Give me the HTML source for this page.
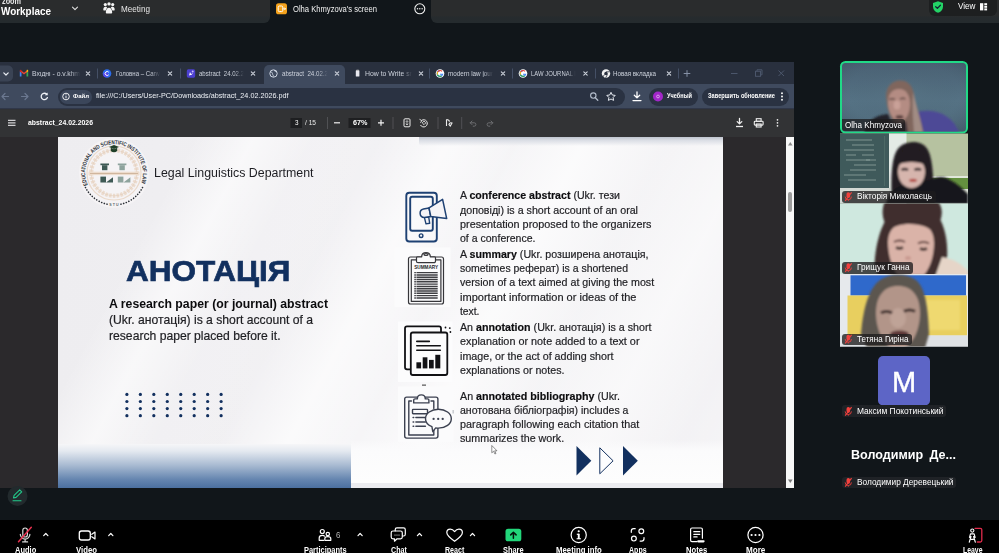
<!DOCTYPE html>
<html lang="en">
<head>
<meta charset="utf-8">
<title>Zoom Workplace - Meeting</title>
<style>
*{box-sizing:border-box;margin:0;padding:0}
html,body{width:999px;height:553px;overflow:hidden;background:#11161a;font-family:"Liberation Sans",sans-serif;}
#root{position:relative;width:999px;height:553px;overflow:hidden;background:#11161a;}
.a{position:absolute}
.t{position:absolute;white-space:nowrap;line-height:1;transform-origin:0 50%;font-family:"Liberation Sans",sans-serif;}
.t b{font-weight:700;color:#0b0b0d}
svg{position:absolute;overflow:visible}
/* top bar */
#tb-left{left:0;top:0;width:270px;height:22.5px;background:linear-gradient(180deg,#2a2c2d 0,#2a2c2d 15.5px,#262b2e 17px,#252b2e 22.5px);border-bottom-right-radius:6px}
#tb-right{left:431px;top:0;width:568px;height:22.5px;background:linear-gradient(180deg,#2a2c2d 0,#2a2c2d 15.5px,#262b2e 17px,#252b2e 22.5px);border-bottom-left-radius:6px}
#tb-pill{left:929px;top:-6px;width:68px;height:21.5px;background:#1d1f20;border-radius:6px}
/* chrome */
#chrome{left:0;top:62px;width:794px;height:426px;background:#2b292c;overflow:hidden}
#tabs{left:0;top:0;width:794px;height:22px;background:#29303e}
#tabact{left:264px;top:3px;width:81px;height:19px;background:#3f4a5e;border-radius:5px 5px 0 0}
#addr{left:0;top:22px;width:794px;height:25px;background:#3f4a5e}
#omni{left:58px;top:25.5px;width:567px;height:18px;background:#2a3242;border-radius:9px}
#filechip{left:60px;top:27.5px;width:32px;height:14px;background:#3b465a;border-radius:7px}
#prof{left:649px;top:25.5px;width:49px;height:18px;background:#2a3242;border-radius:9px}
#upd{left:702px;top:25.5px;width:87px;height:18px;background:#2a3242;border-radius:9px}
#ptb{left:0;top:47px;width:794px;height:28px;background:#323335}
#page{left:57.5px;top:75px;width:665.5px;height:351px;background:#f1eff2;overflow:hidden}
#sbar{left:785.5px;top:75px;width:8.5px;height:351px;background:#f7f7f7}
#sthumb{left:788px;top:192px;width:3.5px;height:20px;background:#9c9c9c;border-radius:2px}
.sep{position:absolute;width:1px;background:#55607a}
/* gallery */
.tile{position:absolute;left:840px;width:128px;overflow:hidden}
.lab{position:absolute;height:11.5px;background:rgba(30,28,30,.78);border-radius:3px}
/* bottom */
#bot{left:0;top:520px;width:999px;height:33px;background:#000}
</style>
</head>
<body>
<div id="root">

<!-- ===== zoom top bar ===== -->
<div id="tb-left" class="a"></div>
<div id="tb-right" class="a"></div>
<div id="tb-pill" class="a"></div>
<svg class="a" style="left:0;top:0" width="999" height="24" viewBox="0 0 999 24">
  <!-- chevron -->
  <path d="M72.5 7.2 L75 9.7 L77.5 7.2" fill="none" stroke="#e0e0e0" stroke-width="1.1" stroke-linecap="round" stroke-linejoin="round"/>
  <!-- meeting people icon -->
  <g fill="#f4f4f4">
    <circle cx="105.3" cy="4.6" r="1.6"/><circle cx="109" cy="3.9" r="1.7"/><circle cx="112.7" cy="4.6" r="1.6"/>
    <path d="M103.3 9.8c0-2.2 1-3 2.1-3s1.6.5 1.8 1.2c-.9.6-1.4 1.500-1.500 2.600h-1.900c-.3 0-.5-.3-.5-.8z"/>
    <path d="M114.700 9.800c0-2.200-1-3-2.100-3s-1.600.5-1.800 1.200c.9.600 1.400 1.500 1.500 2.600h1.900c.3 0 .5-.3.5-.8z"/>
    <path d="M105.800 12.600c0-3.200 1.500-4.800 3.200-4.800s3.200 1.600 3.200 4.800c0 .6-.4.900-.9.900h-4.600c-.5 0-.9-.3-.9-.9z"/>
  </g>
  <!-- orange share icon -->
  <rect x="276" y="3.300" width="11" height="11" rx="2.600" fill="#f4a21c"/>
  <rect x="278.200" y="6" width="4.600" height="5.600" rx="1.200" fill="none" stroke="#fff" stroke-width="1"/>
  <path d="M283.200 8.800h2.300M284.400 7.600l1.200 1.200-1.200 1.200" fill="none" stroke="#fff" stroke-width=".9"/>
  <!-- more circle -->
  <circle cx="419.800" cy="8.800" r="5" fill="none" stroke="#f0f0f0" stroke-width="1.100"/>
  <circle cx="417.500" cy="8.800" r=".75" fill="#f0f0f0"/><circle cx="419.800" cy="8.800" r=".75" fill="#f0f0f0"/><circle cx="422.100" cy="8.800" r=".75" fill="#f0f0f0"/>
  <!-- shield -->
  <path d="M938 1.200l5 1.800v3.700c0 3-2.100 5.100-5 6.100-2.900-1-5-3.100-5-6.100V3z" fill="#23d366"/>
  <path d="M935.700 6.700l1.700 1.700 3-3.200" fill="none" stroke="#123" stroke-width="1.300" stroke-linecap="round" stroke-linejoin="round"/>
  <!-- view grid icon -->
  <rect x="980" y="3.200" width="3.300" height="7.200" fill="#fff"/>
  <rect x="984.300" y="3.200" width="2.800" height="2" fill="#fff"/><rect x="984.300" y="5.800" width="2.800" height="2" fill="#fff"/><rect x="984.300" y="8.400" width="2.800" height="2" fill="#fff"/>
</svg>

<!-- ===== shared chrome window ===== -->
<div id="chrome" class="a">
  <div id="tabs" class="a"></div>
  <div id="tabact" class="a"></div>
  <div id="addr" class="a"></div>
  <div id="omni" class="a"></div>
  <div id="filechip" class="a"></div>
  <div id="prof" class="a"></div>
  <div id="upd" class="a"></div>
  <div id="ptb" class="a"></div>
    <svg class="a" style="left:0;top:0" width="794" height="76" viewBox="0 62 794 76">
    <!-- tab search button -->
    <rect x="-4" y="65.500" width="17" height="16" rx="5" fill="#3a4354"/>
    <path d="M3.800 72.800l2.200 2.200 2.200-2.200" fill="none" stroke="#e8ecf2" stroke-width="1.200" stroke-linecap="round" stroke-linejoin="round"/>
    <!-- gmail -->
    <g><path d="M19.800 71.200v5.200h1.700v-3.600z" fill="#4285f4"/><path d="M28.200 71.200v5.200h-1.700v-3.600z" fill="#34a853"/><path d="M19.800 71.200l4.200 3.200 4.200-3.200v-.5l-1-.4-3.200 2.400-3.200-2.400-1 .4z" fill="#ea4335"/><path d="M26.500 72.800l1.700-1.600v-.5c0-.8-.9-1.200-1.500-.7z" fill="#fbbc04"/><path d="M21.500 72.800l-1.700-1.600v-.5c0-.8.900-1.200 1.500-.7z" fill="#c5221f"/></g>
    <!-- canva -->
    <circle cx="107" cy="73.500" r="4.300" fill="#2a6df0"/><circle cx="105.800" cy="74.500" r="2.600" fill="#7d2ae8" opacity=".55"/>
    <path d="M108.700 72.200a2 2 0 1 0 0 2.600" fill="none" stroke="#fff" stroke-width="1"/>
    <!-- purple square -->
    <rect x="186.800" y="69.300" width="8.400" height="8.400" rx="1.600" fill="#4b3fd0"/><path d="M189 75.600l1-3.700 1.100 2 2-.8-1.400 1.600z" fill="#ffffff"/><circle cx="192.700" cy="71.500" r="1" fill="#c9b8ff"/>
    <!-- globe (active) -->
    <circle cx="273.500" cy="73.500" r="3.700" fill="none" stroke="#cfd6e2" stroke-width="1"/><path d="M270.500 72c1.500 0 2 .8 2 1.800s1 1.200 1 2.700M274.300 70c0 1.400 1.200 1.400 2.700 1.700" fill="none" stroke="#cfd6e2" stroke-width=".9"/>
    <!-- doc icon -->
    <rect x="355.800" y="70.300" width="3.600" height="6.200" rx=".6" fill="#e8e8ee"/><rect x="356.500" y="69.700" width="2.200" height="1.200" fill="#bbb"/>
    <!-- google icons -->
    <g id="gico"><circle cx="440" cy="73.500" r="4.300" fill="#fff"/><path d="M440 70.700a2.800 2.800 0 1 0 2.700 3.500h-2.700" fill="none" stroke="#4285f4" stroke-width="1.150"/><path d="M437.700 71.900a2.800 2.800 0 0 1 4.300-.6" fill="none" stroke="#ea4335" stroke-width="1.150"/><path d="M437.500 74.700a2.800 2.800 0 0 1 .2-2.800" fill="none" stroke="#fbbc05" stroke-width="1.150"/><path d="M441.500 75.900a2.800 2.800 0 0 1-4-1.200" fill="none" stroke="#34a853" stroke-width="1.150"/></g>
    <use href="#gico" x="83"/>
    <!-- chrome icon -->
    <circle cx="606" cy="73.500" r="4.200" fill="#f2f2f2"/><circle cx="606" cy="73.500" r="1.700" fill="#29303e"/><path d="M606 71.800h3.800M604.500 74.400l-1.900 3.200M607.500 74.400l-1.800 3.300" stroke="#29303e" stroke-width=".8"/>
    <!-- close x -->
    <g stroke="#cfd4dd" stroke-width="1.100" stroke-linecap="round">
      <g id="cx"><path d="M86.300 71.800l3.400 3.400M89.700 71.800l-3.400 3.400"/></g>
      <use href="#cx" x="82"/><use href="#cx" x="165"/><use href="#cx" x="249"/><use href="#cx" x="333"/><use href="#cx" x="415"/><use href="#cx" x="497.500"/><use href="#cx" x="581"/>
    </g>
    <!-- separators -->
    <g stroke="#455066" stroke-width="1"><path d="M97.500 68.500v10M180.500 68.500v10M429.500 68.500v10M512.500 68.500v10M595.500 68.500v10M678.500 68.500v10"/></g>
    <!-- plus -->
    <path d="M683.700 73.500h6.600M687 70.200v6.600" stroke="#8590a5" stroke-width="1"/>
    <!-- window controls (dim) -->
    <g stroke="#4b566b" stroke-width="1" fill="none"><path d="M731 73.500h6.500"/><rect x="755.500" y="71.300" width="5" height="5"/><path d="M757 71.300v-1.500h5v5h-1.500"/><path d="M778.500 70.500l5.500 5.500M784 70.500l-5.500 5.500"/></g>

    <!-- nav arrows -->
    <g fill="none" stroke="#6b7890" stroke-width="1.200" stroke-linecap="round" stroke-linejoin="round">
      <path d="M8.500 96.500h-6M5 93.500l-3 3 3 3"/><path d="M21.500 96.500h6M25 93.500l3 3-3 3"/>
    </g>
    <path d="M46.800 94.300a3.200 3.200 0 1 0 .6 3.300" fill="none" stroke="#eef1f6" stroke-width="1.300" stroke-linecap="round"/><path d="M47.600 92.400v2.800h-2.800z" fill="#eef1f6"/>
    <!-- info i -->
    <circle cx="66" cy="96.500" r="3.300" fill="none" stroke="#fff" stroke-width=".9"/><path d="M66 95.900v2.400" stroke="#fff" stroke-width=".9"/><circle cx="66" cy="94.700" r=".5" fill="#fff"/>
    <!-- zoom glass -->
    <circle cx="593.300" cy="95.600" r="2.700" fill="none" stroke="#b3bccb" stroke-width="1.100"/><path d="M595.300 97.700l2.500 2.500" stroke="#b3bccb" stroke-width="1.300" stroke-linecap="round"/>
    <!-- star -->
    <path d="M611 92.300l1.300 2.700 2.900.4-2.100 2.100.5 2.900-2.600-1.400-2.600 1.400.5-2.900-2.100-2.100 2.900-.4z" fill="none" stroke="#e4e8ef" stroke-width="1" stroke-linejoin="round"/>
    <!-- download -->
    <path d="M637 92v5.600M634.300 95.200l2.700 2.700 2.700-2.700M633 100.600h8" fill="none" stroke="#fff" stroke-width="1.300" stroke-linecap="round" stroke-linejoin="round"/>
    <!-- profile circle -->
    <circle cx="658" cy="96.500" r="5" fill="#a227c9"/><circle cx="658" cy="96.500" r="1.400" fill="none" stroke="#e9c8f5" stroke-width=".7"/>
    <!-- kebab -->
    <circle cx="782" cy="93.200" r=".95" fill="#fff"/><circle cx="782" cy="96.500" r=".95" fill="#fff"/><circle cx="782" cy="99.800" r=".95" fill="#fff"/>
    <!-- bottom line of addr bar -->
    <rect x="0" y="108.200" width="794" height=".9" fill="#2d3445"/>

    <!-- pdf toolbar -->
    <path d="M8 120.300h7.500M8 122.800h7.500M8 125.300h7.500" stroke="#cfcfd2" stroke-width="1.300"/>
    <rect x="290.500" y="118" width="11.500" height="10" fill="#1e1f21"/>
    <rect x="348.500" y="118" width="22" height="10" fill="#1e1f21"/>
    <g stroke="#505154" stroke-width="1"><path d="M327.500 117v12M393 117v12M438 117v12M461.700 117v12"/></g>
    <path d="M334 122.800h6" stroke="#f2f2f2" stroke-width="1.200"/><path d="M378 122.800h6M381 119.800v6" stroke="#f2f2f2" stroke-width="1.200"/>
    <rect x="404" y="118.800" width="6" height="8" rx="1" fill="none" stroke="#ececec" stroke-width="1"/><path d="M407 120.800v4M405.800 121.800l1.200-1.200 1.200 1.200M405.800 123.800l1.200 1.200 1.200-1.200" fill="none" stroke="#ececec" stroke-width=".7"/>
    <path d="M421.500 120.500a3.600 3.600 0 1 1-1 4.500" fill="none" stroke="#ececec" stroke-width="1"/><path d="M419.500 119.300l2.300 1.300-1.300 2.200" fill="none" stroke="#ececec" stroke-width=".9"/><rect x="422.800" y="121.600" width="2.500" height="2.500" transform="rotate(45 424 122.800)" fill="none" stroke="#ececec" stroke-width=".8"/>
    <path d="M446.500 119.500v6.500M446.500 119.500c1.800 0 2.800.8 3 2.200M449 124.500c.4-1.600 1.500-2.200 3-1.500l-1.700 3z" fill="none" stroke="#ececec" stroke-width="1.100"/>
    <g fill="none" stroke="#6c6d70" stroke-width="1" stroke-linecap="round" stroke-linejoin="round"><path d="M472 121l-1.800 1.800 1.800 1.800M470.200 122.800h4a1.700 1.700 0 0 1 0 3.400h-1"/><path d="M491 121l1.800 1.800-1.800 1.800M492.800 122.800h-4a1.700 1.700 0 0 0 0 3.400h1"/></g>
    <path d="M739.500 118.500v5M737.200 121.600l2.300 2.300 2.300-2.300" fill="none" stroke="#f0f0f0" stroke-width="1.300" stroke-linecap="round" stroke-linejoin="round"/><path d="M736 126.500h7" stroke="#f0f0f0" stroke-width="1.300"/>
    <g fill="none" stroke="#f0f0f0" stroke-width="1.100"><rect x="756.300" y="118.700" width="4.800" height="2.600"/><rect x="754.300" y="121.300" width="8.800" height="3.800" rx=".8"/><rect x="756.300" y="124" width="4.800" height="3"/></g>
    <circle cx="777.500" cy="119.800" r=".85" fill="#f0f0f0"/><circle cx="777.500" cy="122.800" r=".85" fill="#f0f0f0"/><circle cx="777.500" cy="125.800" r=".85" fill="#f0f0f0"/>
  </svg>

  <div id="page" class="a">
        <!-- slide background (coords relative to page: subtract 57.5, 137) -->
    <div class="a" style="left:0;top:0;width:666px;height:351px;background:
      linear-gradient(118deg,rgba(255,255,255,0) 0%,rgba(255,255,255,0) 16%,rgba(255,255,255,.6) 23%,rgba(255,255,255,.15) 30%,rgba(255,255,255,.1) 38%,rgba(255,255,255,.7) 46%,rgba(255,255,255,.35) 54%,rgba(255,255,255,.75) 62%,rgba(255,255,255,.3) 72%,rgba(255,255,255,.6) 82%,rgba(255,255,255,.2) 92%,rgba(255,255,255,.4) 100%),
      linear-gradient(90deg,#eeedf0 0%,#f1f0f3 45%,#f0eff2 100%)"></div>
    <!-- top right shadow band -->
    <div class="a" style="left:361px;top:0;width:305px;height:9px;background:linear-gradient(180deg,#bfc4cf 0%,#dcdfe6 40%,rgba(240,240,244,0) 100%);border-bottom-left-radius:3px"></div>
    <!-- bottom right light band -->
    <div class="a" style="left:293px;top:303px;width:373px;height:43px;background:linear-gradient(180deg,rgba(255,255,255,0) 0%,#fbfbfc 25%,#fdfdfd 100%)"></div>
    <div class="a" style="left:293px;top:346px;width:373px;height:5px;background:#ebebef"></div>
    <!-- bottom left blue gradient -->
    <div class="a" style="left:0;top:307px;width:293px;height:44px;background:linear-gradient(180deg,#f6f6f8 0%,#e4e9f0 16%,#a9bbd2 48%,#6686b0 80%,#4c70a0 100%)"></div>

    <!-- logo -->
    <svg class="a" style="left:19.900px;top:-.800px" width="74" height="74" viewBox="-37 -37 74 74">
      <defs>
        <path id="ringTop" d="M-26.300 12 A28.900 28.900 0 1 1 26.600 11.400"/>
      </defs>
      <circle r="35" fill="#f5f3f5"/>
      <circle r="27" fill="none" stroke="#ead9ca" stroke-width="1.200"/>
      <circle r="22.800" fill="none" stroke="#ecdccf" stroke-width="4.200" stroke-dasharray="2.600 1.200"/>
      <circle r="22.800" fill="none" stroke="#e3cdb9" stroke-width=".6"/>
      <text font-family="Liberation Sans, sans-serif" font-size="5.700" font-weight="700" fill="#2b3036" textLength="113" lengthAdjust="spacingAndGlyphs"><textPath href="#ringTop" startOffset="0" textLength="113" lengthAdjust="spacingAndGlyphs">EDUCATIONAL AND SCIENTIFIC INSTITUTE OF LAW</textPath></text>
      <path d="M-28.500 14.500 A32 32 0 0 0 28.500 14.500" fill="none" stroke="#2b3036" stroke-width="1.600" stroke-dasharray=".1 2.700" stroke-linecap="round"/>
      <rect x="-6" y="28.200" width="12" height="5" fill="#f5f3f5"/>
      <text font-family="Liberation Sans, sans-serif" font-size="3.600" font-weight="700" fill="#5f6b6b" text-anchor="middle" x=".4" y="32.800" letter-spacing="1.100">STU</text>
      <!-- cap -->
      <path d="M-5 -26 L0 -28 L5 -26 L0 -24 z" fill="#1f3f28"/>
      <path d="M-3.200 -25.200 v3.100 c1.900 1.800 4.500 1.800 6.400 0 v-3.100 L0 -23.700z" fill="#1f3f28"/>
      <!-- LL emblem -->
      <g fill="#3f5a55">
        <rect x="-13.600" y="-9.500" width="8.600" height="1.700"/><rect x="-12" y="-7.800" width="5.400" height="5"/>
        <rect x="-13.600" y="3.600" width="5.600" height="5.900"/><path d="M-8 9.500h7v-5.200z"/>
      </g>
      <g fill="#8ea39d">
        <rect x="3.800" y="-9.500" width="8.600" height="1.700"/><rect x="5.400" y="-7.800" width="5.400" height="5"/>
        <rect x="3.800" y="3.600" width="5.600" height="5.900"/><path d="M9.400 9.500h7v-5.200z"/>
      </g>
      <rect x="-25.500" y="-1.300" width="51" height="3.400" fill="#eddccd"/>
      <rect x="-24" y="0" width="48" height=".8" fill="#c9ad93"/>
    </svg>

    <!-- dots -->
    <svg class="a" style="left:0;top:0" width="666" height="351" viewBox="57.500 137 666 351">
      <g fill="#12305f">
        <g id="dcol"><circle cx="126.400" cy="394.400" r="1.600"/><circle cx="126.400" cy="401.500" r="1.600"/><circle cx="126.400" cy="408.600" r="1.600"/><circle cx="126.400" cy="415.700" r="1.600"/></g>
        <use href="#dcol" x="13.460"/><use href="#dcol" x="26.920"/><use href="#dcol" x="40.380"/><use href="#dcol" x="53.840"/><use href="#dcol" x="67.300"/><use href="#dcol" x="80.760"/><use href="#dcol" x="94.220"/>
      </g>

      <!-- arrows -->
      <path d="M576 446 L590.800 460.800 L576 475.500z" fill="#12305f"/>
      <path d="M599.300 447.800 L612.600 460.800 L599.300 473.800z" fill="#fdfdfe" stroke="#12305f" stroke-width="1" stroke-linejoin="miter"/>
      <path d="M622.500 446 L637.300 460.800 L622.500 475.500z" fill="#12305f"/>

      <!-- icon 1: phone + megaphone -->
      <g fill="none" stroke="#1e4173" stroke-width="1.900" stroke-linejoin="round" stroke-linecap="round">
        <rect x="405.800" y="192.700" width="30.500" height="48.800" rx="3"/>
        <rect x="409.700" y="196.800" width="22.600" height="34" rx="2"/>
        <circle cx="420.600" cy="235.700" r="1.800" stroke-width="1.400"/>
        <path d="M423.800 217.200 L425.500 223.900 L429.200 223.300 L428.200 217z" fill="#f5f4f7" stroke-width="1.400"/>
        <path d="M428.500 207.900 L423 209 a4.300 4.300 0 0 0 .8 8.500 L430.300 216.600z" fill="#f5f4f7" stroke-width="1.500"/>
        <path d="M428.500 207.900 L442.100 199.300 L446.200 218.600 L430.300 216.600z" fill="#f5f4f7" stroke-width="1.500"/>
      </g>

      <!-- icon 2: SUMMARY clipboard -->
      <rect x="394" y="247.500" width="56" height="59.500" fill="#fbfbfc"/>
      <g fill="none" stroke="#36363a" stroke-width="1.200" stroke-linejoin="round">
        <rect x="408" y="257" width="35" height="47" rx="2"/>
        <rect x="410.800" y="259.800" width="29.600" height="41.600"/>
        <path d="M416 261.200 v-3.400 a1 1 0 0 1 1 -1 h4.200 c0 -5.600 8.600 -5.600 8.600 0 h4.200 a1 1 0 0 1 1 1 v3.400 a1.500 1.500 0 0 1 -1.500 1.500 h-16 a1.500 1.500 0 0 1 -1.500 -1.500z" fill="#fbfbfc"/>
        <ellipse cx="425.500" cy="254.600" rx="2.100" ry=".9"/>
      </g>
      <text x="425.700" y="269.300" text-anchor="middle" font-family="Liberation Sans, sans-serif" font-weight="700" font-size="4.900" fill="#26262a" textLength="24" lengthAdjust="spacingAndGlyphs">SUMMARY</text>
      <path d="M413.800 272.600h23.400M413.800 274.900h23.400M413.800 277.200h23.400M413.800 279.500h23.400M413.800 281.800h23.400M413.800 284.100h23.400M413.800 286.400h23.400M413.800 288.700h23.400M413.800 291h23.400M413.800 293.300h23.400M413.800 295.600h23.400M413.800 297.900h23.400" stroke="#3e3e42" stroke-width="1.450" fill="none"/>
      <path d="M415.800 271.500v27.500" stroke="#fbfbfc" stroke-width=".6" fill="none"/>

      <!-- icon 3: documents chart -->
      <rect x="397.500" y="321.500" width="54.500" height="60.500" fill="#fcfcfd"/>
      <g fill="none" stroke="#111114" stroke-width="1.800" stroke-linejoin="round" stroke-linecap="round">
        <path d="M410.300 369.300 H406.500 a2 2 0 0 1 -2 -2 V328.300 a2 2 0 0 1 2 -2 H438.500 a2 2 0 0 1 2 2 V332"/>
        <rect x="410.300" y="332.500" width="36.500" height="42.500" rx="2" fill="#fcfcfd"/>
        <path d="M416.300 341.400h12.500M416.300 345.800h23.500M416.300 350.300h23.500" stroke-width="1.600"/>
      </g>
      <g fill="#111114">
        <rect x="415.900" y="362.300" width="4.700" height="6.100"/><rect x="422.200" y="357.300" width="4.700" height="11.100"/><rect x="428.500" y="359.900" width="4.700" height="8.500"/><rect x="434.800" y="354.800" width="5" height="13.600"/>
        <circle cx="445" cy="327.500" r=".9"/><circle cx="449.300" cy="328.100" r=".9"/><circle cx="449.900" cy="332" r=".9"/>
        <rect x="421.500" y="384.600" width="4" height="1" fill="#333"/>
      </g>

      <!-- icon 4: clipboard + chat -->
      <rect x="397.500" y="386.500" width="55.500" height="55.500" fill="#fbfbfc"/>
      <g fill="none" stroke="#3c4150" stroke-width="1.400" stroke-linejoin="round" stroke-linecap="round">
        <rect x="404.200" y="397.100" width="33.200" height="41" rx="2"/>
        <path d="M430.500 401 H433.300 V408.500 M433.300 429 V435 H408.300 V401 H411"/>
        <path d="M413.200 402.900 v-2.700 a1.300 1.300 0 0 1 1.300 -1.300 h2.300 c0 -5.400 8 -5.400 8 0 h2.300 a1.300 1.300 0 0 1 1.300 1.300 v2.700z" fill="#fbfbfc"/>
        <rect x="412" y="409.400" width="15" height="4.300" rx=".6"/>
        <path d="M412.600 417.600h.6M415.400 417.600h9.500M412.600 421.900h.6M415.400 421.900h9.500M412.600 426.300h.6M415.400 426.300h9.500" stroke-width="1.500"/>
        <path d="M437.900 409.300 c7.200 0 12.900 4.200 12.900 9.400 s-5.700 9.400 -12.900 9.400 c-.9 0 -1.800 -.1 -2.700 -.2 l-2.900 3.800 l-.9 -5 c-3.900 -1.600 -6.400 -4.600 -6.400 -8 c0 -5.200 5.700 -9.400 12.900 -9.400z" fill="#fbfbfc"/>
      </g>
      <g fill="#3c4150"><circle cx="433.100" cy="418.900" r="1.150"/><circle cx="437.700" cy="418.900" r="1.150"/><circle cx="442.200" cy="418.900" r="1.150"/></g>
      <rect x="452.200" y="410" width=".8" height="3.500" fill="#9a9fa8"/>

      <!-- mouse cursor -->
      <path d="M491.300 445.500 v7.300 l1.800 -1.600 l1.300 2.800 l1.100 -.5 l-1.300 -2.700 h2.300z" fill="#fff" stroke="#444" stroke-width=".6"/>
    </svg>

  </div>
  <div id="sbar" class="a"></div>
  <div id="sthumb" class="a" style="top:130px"></div>
  <svg class="a" style="left:785.5px;top:75px" width="9" height="351" viewBox="0 0 9 351">
    <path d="M2 8.500l2.300-3.500 2.300 3.500z" fill="#8a8a8a"/>
    <path d="M2 342.500l2.300 3.500 2.300-3.500z" fill="#7a7a7a"/>
  </svg>
</div>

<!-- ===== gallery ===== -->
<svg class="a" style="left:0;top:0" width="999" height="553" viewBox="0 0 999 553">
  <defs>
    <filter id="bl1" x="-10%" y="-10%" width="120%" height="120%"><feGaussianBlur stdDeviation="1.300"/></filter>
    <filter id="bl2" x="-10%" y="-10%" width="120%" height="120%"><feGaussianBlur stdDeviation="0.700"/></filter>
    <clipPath id="c1"><rect x="842" y="63" width="124" height="68.500" rx="3.500"/></clipPath>
    <clipPath id="c2"><rect x="840" y="133.500" width="128" height="70"/></clipPath>
    <clipPath id="c3"><rect x="840" y="203.500" width="128" height="70.500"/></clipPath>
    <clipPath id="c4"><rect x="840" y="274" width="128" height="72.500"/></clipPath>
    <linearGradient id="g1" x1="0" y1="0" x2="0" y2="1"><stop offset="0" stop-color="#4a6174"/><stop offset=".55" stop-color="#557284"/><stop offset="1" stop-color="#506b7c"/></linearGradient>
  <radialGradient id="v1" cx=".5" cy=".45" r=".75"><stop offset="0" stop-color="#5d7a8a" stop-opacity=".35"/><stop offset=".6" stop-color="#4a6070" stop-opacity="0"/><stop offset="1" stop-color="#2f4150" stop-opacity=".45"/></radialGradient>
  </defs>

  <!-- tile 1: Olha (active speaker) -->
  <rect x="840" y="61" width="128" height="72.500" rx="5.500" fill="#21d987"/>
  <g clip-path="url(#c1)">
    <rect x="842" y="63" width="124" height="69" fill="url(#g1)"/>
    <rect x="842" y="63" width="124" height="69" fill="url(#v1)"/>
    <g filter="url(#bl1)">
      <path d="M864 133c2-10 10-18 24-19l8 19z" fill="#222229"/>
      <path d="M914 113c14-5 30-2 40 10l6 10h-46z" fill="#4e4a96"/>
      <path d="M886.500 100c-2-12 5-19.500 14-19.500 8 0 12.500 6 14 16 1.500 10 6 20 9 36.500h-18c-9-4-18-17-19-33z" fill="#80665d"/>
      <path d="M913 92c3 12 7 26 10 41h-9c-1-14-2-28-1-41z" fill="#a18c84"/>
      <path d="M888 103c0-9 4-14 11-14s11 6 11 15-4 17-10 17c-7 0-12-9-12-18z" fill="#b48c83"/>
      <ellipse cx="897" cy="105" rx="3.500" ry="4.500" fill="#c9a198"/>
      <path d="M889.500 99.500c2-1 4-1 5.500 0M900 99c2-1 4-1 5.500 0" stroke="#5b4440" stroke-width="1.500" fill="none"/>
      <ellipse cx="899.500" cy="117" rx="4" ry="2" fill="#5f4442"/>
      <path d="M889 118c4 6 12 7 17 3l2 12h-18z" fill="#3a3038"/>
    </g>
  </g>

  <!-- tile 2: Вікторія -->
  <g clip-path="url(#c2)">
    <rect x="840" y="133" width="128" height="71" fill="#b6c2a0"/>
    <rect x="840" y="133" width="49" height="55" fill="#3f5a5b"/>
    <rect x="889" y="133" width="17.500" height="71" fill="#e4ebe6"/>
    <rect x="906.500" y="176" width="62" height="2" fill="#e0e7da"/>
    <rect x="906.500" y="178" width="62" height="11" fill="#64903f"/>
    <rect x="840" y="188" width="50" height="16" fill="#d3d9d4"/>
    <rect x="940" y="189" width="28" height="15" fill="#dfe5dc"/>
    <g stroke="#a9bcb8" stroke-width=".8" fill="none" opacity=".75" filter="url(#bl2)">
      <path d="M846 140h26M852 145h22M844 150h30M862 155h12M846 160h24M854 165h22M850 170h26M844 175h22M848 180h28M846 155h10M866 160h10"/>
      <path d="M884.500 136v50" stroke="#58746f"/>
    </g>
    <g filter="url(#bl1)">
      <path d="M892 204c-1-20-1-42 4-52 5-12 26-14 32-2 6 12 4 30 8 54z" fill="#211c20"/>
      <path d="M886 204c2-12 10-18 22-20l22-4c8-4 14-4 20 0 8 4 14 10 18 14v10z" fill="#17161a"/>
      <path d="M898 172c0-9 5-13 13.500-13s13.500 4 13.500 13-6 16-13.500 16-13.500-7-13.500-16z" fill="#d6b5ad"/>
      <path d="M896.500 165c1-12 8-18 15-18s14 6 15 18c-9-4-21-4-30 0z" fill="#211c20"/>
      <path d="M901.500 170c2-1.200 4.500-1.200 6.500 0M914.500 170c2-1.200 4.500-1.200 6.500 0" stroke="#2a1f22" stroke-width="2.600" fill="none"/>
      <ellipse cx="913" cy="180.300" rx="4" ry="1.600" fill="#b2453f"/>
    </g>
  </g>

  <!-- tile 3: Грищук -->
  <g clip-path="url(#c3)">
    <rect x="840" y="203" width="128" height="71" fill="#cfe8df"/>
    <g filter="url(#bl1)">
      <path d="M874.500 264c1-18 5-32 10-42-3-8-2-14 0-20h54c4 6 4 12 2 18 6 12 8 28 6 44l-10 12h-58z" fill="#3f2f2e"/>
      <path d="M942 257c12 2 22 8 27 16v4h-34z" fill="#e6d5c8"/>
      <path d="M888 242c0-13 8-20 23-20s23 7 23 21c0 13-4 25-10 32h-26c-6-7-10-20-10-33z" fill="#dab3a8"/>
      <path d="M886 232c2-8 8-14 14-15l28 1c6 6 7 10 7 16-8-12-36-14-49-2z" fill="#3f2f2e"/>
      <path d="M894 242c3-2 8-2 11 0M918 243.500c3-2 8-2 11 0" stroke="#5a3b38" stroke-width="1.800" fill="none"/>
      <path d="M896 247.500c2 1 5 1 7 0M920 248.500c2 1 5 1 7 0" stroke="#3a2928" stroke-width="2.600" fill="none"/>
      <ellipse cx="908" cy="258" rx="3" ry="2" fill="#c99a90"/>
    </g>
  </g>

  <!-- tile 4: Тетяна -->
  <g clip-path="url(#c4)">
    <rect x="840" y="274" width="128" height="73" fill="#e6e9ec"/>
    <rect x="850.500" y="275.300" width="115.500" height="20.200" fill="#2f69cb"/>
    <rect x="847.500" y="295.500" width="119.500" height="40" fill="#e8cf5f"/>
    <rect x="900" y="300" width="60" height="30" fill="#efd96f" filter="url(#bl1)"/>
    <rect x="840" y="335.500" width="128" height="11.500" fill="#dfe2e5"/>
    <g filter="url(#bl1)">
      <path d="M861 334c2-26 8-46 19-54 10-7 26-7 36 0 10 8 12 30 13 54l-4 14h-58z" fill="#5c5650"/>
      <path d="M876 313c0-17 8-27 22-27s22 10 22 27-8 36-22 36-22-19-22-36z" fill="#b29589"/>
      <ellipse cx="898" cy="318" rx="8" ry="10" fill="#bfa397"/>
      <path d="M881 313c3-2 8-2 11 0M904 311.500c3-2 8-2 11 0" stroke="#3f302e" stroke-width="3.200" fill="none"/>
      <ellipse cx="899.500" cy="334" rx="9.500" ry="3.500" fill="#5e3937"/>
    </g>
  </g>

  <!-- M avatar -->
  <rect x="878" y="356" width="52" height="49.500" rx="5" fill="#5d65c6"/>
</svg>

<!-- name labels -->
<div class="lab" style="left:842px;top:118.800px;width:63px;height:12.200px;border-radius:0 3px 0 3px;background:rgba(28,26,28,.72)"></div>
<div class="lab" style="left:841.500px;top:191px;width:94px"></div>
<div class="lab" style="left:841.500px;top:262px;width:71px"></div>
<div class="lab" style="left:841.500px;top:333.500px;width:70px"></div>
<div class="lab" style="left:841.500px;top:404.600px;width:104.500px;height:12.400px;background:#1f2226"></div>
<div class="lab" style="left:841.500px;top:476.800px;width:114.500px;background:#1f2226"></div>
<svg class="a" style="left:0;top:0" width="999" height="553" viewBox="0 0 999 553">
  <g id="mic">
    <rect x="846.500" y="192.300" width="3.600" height="5.800" rx="1.800" fill="#f2403d"/>
    <path d="M845.200 196.600a3.100 3.100 0 0 0 6.200 0M848.300 199.700v1.200" fill="none" stroke="#f2403d" stroke-width=".9"/>
    <path d="M851.600 192.300l-6.400 8.600" stroke="#f2403d" stroke-width="1.100"/>
  </g>
  <use href="#mic" y="71"/><use href="#mic" y="142.500"/><use href="#mic" y="214.800"/><use href="#mic" y="285.800"/>
</svg>


<!-- ===== bottom toolbar ===== -->
<div id="bot" class="a"></div>
<svg class="a" style="left:0;top:0" width="999" height="553" viewBox="0 0 999 553">
  <!-- pencil annotate button -->
  <circle cx="17.500" cy="496" r="10" fill="#222a2d"/>
  <g fill="none" stroke="#22c98a" stroke-width="1.100" stroke-linejoin="round" stroke-linecap="round">
    <path d="M13.500 498l.6-2.600 5.600-5.600 2 2-5.600 5.600z"/><path d="M13 500.800h8"/>
  </g>
  <g fill="none" stroke="#fff" stroke-width="1.200" stroke-linecap="round" stroke-linejoin="round">
    <!-- chevrons -->
    <g id="chev"><path d="M43.700 535.600l2.100-2.100 2.100 2.100"/></g>
    <use href="#chev" x="65"/><use href="#chev" x="314.300"/><use href="#chev" x="373.700"/><use href="#chev" x="426.700"/>
    <!-- audio mic -->
    <rect x="22.800" y="528" width="4.600" height="9" rx="2.300" stroke="#d9d9d9"/>
    <path d="M20.300 534.300a4.800 4.800 0 0 0 9.600 0M25.100 539.200v2.600M22.600 541.900h5" stroke="#d9d9d9"/>
    <path d="M31.300 527.300l-12.800 14.400" stroke="#e8304f" stroke-width="1.500"/>
    <!-- video -->
    <rect x="79.300" y="531" width="11" height="9" rx="2.200" stroke-width="1.300"/>
    <path d="M91.800 534.300l3.200-2.200v6.800l-3.200-2.200" stroke-width="1.200"/>
    <!-- participants -->
    <circle cx="322.300" cy="531.500" r="2"/><path d="M319.200 540.300v-2.300c0-1.700 1.300-2.700 3.100-2.700 1 0 1.800.3 2.300.8M319.200 540.300h4.500"/>
    <circle cx="327.800" cy="534" r="1.700"/><path d="M324.800 540.300v-1.600c0-1.300 1.200-2 3-2s3 .7 3 2v1.600z"/>
    <!-- chat -->
    <path d="M395.200 530.800v-1.100c0-1 .8-1.800 1.800-1.800h6.500c1 0 1.800.8 1.800 1.800v4.500c0 1-.8 1.800-1.800 1.800h-.5"/>
    <path d="M393 531h7.500c1 0 1.800.8 1.800 1.800v4.200c0 1-.8 1.800-1.800 1.800h-3.400l-2.600 2.400v-2.400h-1.500c-1 0-1.800-.8-1.800-1.800v-4.200c0-1 .8-1.800 1.800-1.800z"/>
    <!-- react heart -->
    <path d="M454.600 541.300c-4.400-3-7.800-5.600-7.800-8.700 0-2 1.500-3.500 3.500-3.500 1.700 0 3.100.9 4.300 2.500 1.200-1.600 2.600-2.500 4.300-2.500 2 0 3.500 1.500 3.500 3.500 0 3.100-3.400 5.700-7.800 8.700z"/>
    <!-- meeting info -->
    <circle cx="578.700" cy="535" r="7.600"/>
    <!-- apps -->
    <path d="M631.300 532.300v-1.300c0-1.300 1-2.300 2.300-2.300h1.600M644 537.500v1.300c0 1.300-1 2.300-2.300 2.300h-1.600"/>
    <circle cx="641.300" cy="531.300" r="2.400"/><circle cx="633.900" cy="538.600" r="2.400"/>
    <!-- notes -->
    <path d="M692 528h9c.8 0 1.400.6 1.400 1.400v8.800M697 541.700h-5c-.8 0-1.400-.6-1.400-1.400v-10.900c0-.8.600-1.400 1.400-1.400"/>
    <path d="M693.800 531.700h6M693.800 534.300h6M693.800 536.900h3.300"/>
    <path d="M698.300 541.300h5.200" stroke-width="2.300"/>
    <!-- more -->
    <circle cx="755.500" cy="535" r="7.600"/>
  </g>
  <g fill="#fff">
    <circle cx="578.700" cy="531.300" r="1.050"/><rect x="577.800" y="533.700" width="1.900" height="5.300" rx=".4"/><rect x="576.800" y="533.700" width="2.400" height="1.200"/><rect x="576.600" y="538.200" width="4.300" height="1.100"/>
    <circle cx="751.600" cy="535" r="1.100"/><circle cx="755.500" cy="535" r="1.100"/><circle cx="759.400" cy="535" r="1.100"/>
    <circle cx="395" cy="535" r=".6"/><circle cx="397" cy="535" r=".6"/><circle cx="399" cy="535" r=".6"/>
  </g>
  <!-- share -->
  <rect x="505.500" y="528.800" width="15.800" height="12.500" rx="2.600" fill="#22d67a"/>
  <path d="M513.400 538.300v-5.600M510.700 534.900l2.700-2.700 2.700 2.700" fill="none" stroke="#04130b" stroke-width="1.500" stroke-linecap="round" stroke-linejoin="round"/>
  <!-- leave -->
  <g fill="none" stroke-linecap="round" stroke-linejoin="round">
    <path d="M975 528.300h5.300c.9 0 1.500.6 1.500 1.500v10.700c0 .9-.6 1.500-1.500 1.500h-3" stroke="#e02b4b" stroke-width="1.300"/>
    <circle cx="972.300" cy="530.600" r="1.600" stroke="#fff" stroke-width="1.100"/>
    <path d="M969.500 537.300l1-3.400h3.600l1 3.400M971 536.500l-1.700 5.700M973.600 536.500l1.700 5.700M971.200 539.300h2.300" stroke="#fff" stroke-width="1.200"/>
  </g>
</svg>


<div id="t0" class="t" style="left:154.00px;top:166.59px;font-size:12.30px;font-weight:400;color:#1d1d22;transform:scaleX(1.0057);">Legal Linguistics Department</div>
<div id="t1" class="t" style="left:126.00px;top:255.77px;font-size:29.80px;font-weight:700;color:#12305f;transform:scaleX(1.0577);-webkit-text-stroke:.7px #12305f;">АНОТАЦІЯ</div>
<div id="t2" class="t" style="left:109.00px;top:297.50px;font-size:12.40px;font-weight:400;color:#111;transform:scaleX(0.9898);"><b>A research paper (or journal) abstract</b></div>
<div id="t3" class="t" style="left:109.00px;top:314.00px;font-size:12.40px;font-weight:400;color:#1e1e22;transform:scaleX(0.9820);-webkit-text-stroke:.2px #1e1e22;">(Ukr. анотація) is a short account of a</div>
<div id="t4" class="t" style="left:109.00px;top:330.10px;font-size:12.40px;font-weight:400;color:#1e1e22;transform:scaleX(0.9803);-webkit-text-stroke:.2px #1e1e22;">research paper placed before it.</div>
<div id="t5" class="t" style="left:459.50px;top:190.23px;font-size:11.30px;font-weight:400;color:#1e1e22;transform:scaleX(0.9404);-webkit-text-stroke:.2px #1e1e22;">A <b>conference abstract</b> (Ukr. тези</div>
<div id="t6" class="t" style="left:459.50px;top:204.63px;font-size:11.30px;font-weight:400;color:#1e1e22;transform:scaleX(0.9439);-webkit-text-stroke:.2px #1e1e22;">доповіді) is a short account of an oral</div>
<div id="t7" class="t" style="left:459.50px;top:218.83px;font-size:11.30px;font-weight:400;color:#1e1e22;transform:scaleX(0.9588);-webkit-text-stroke:.2px #1e1e22;">presentation proposed to the organizers</div>
<div id="t8" class="t" style="left:459.50px;top:232.93px;font-size:11.30px;font-weight:400;color:#1e1e22;transform:scaleX(0.9319);-webkit-text-stroke:.2px #1e1e22;">of a conference.</div>
<div id="t9" class="t" style="left:459.50px;top:248.83px;font-size:11.30px;font-weight:400;color:#1e1e22;transform:scaleX(0.9435);-webkit-text-stroke:.2px #1e1e22;">A <b>summary</b> (Ukr. розширена анотація,</div>
<div id="t10" class="t" style="left:459.50px;top:263.43px;font-size:11.30px;font-weight:400;color:#1e1e22;transform:scaleX(0.9268);-webkit-text-stroke:.2px #1e1e22;">sometimes реферат) is a shortened</div>
<div id="t11" class="t" style="left:459.50px;top:277.33px;font-size:11.30px;font-weight:400;color:#1e1e22;transform:scaleX(0.9457);-webkit-text-stroke:.2px #1e1e22;">version of a text aimed at giving the most</div>
<div id="t12" class="t" style="left:459.50px;top:291.63px;font-size:11.30px;font-weight:400;color:#1e1e22;transform:scaleX(0.9759);-webkit-text-stroke:.2px #1e1e22;">important information or ideas of the</div>
<div id="t13" class="t" style="left:459.50px;top:305.93px;font-size:11.30px;font-weight:400;color:#1e1e22;transform:scaleX(0.9129);-webkit-text-stroke:.2px #1e1e22;">text.</div>
<div id="t14" class="t" style="left:459.50px;top:321.93px;font-size:11.30px;font-weight:400;color:#1e1e22;transform:scaleX(0.9455);-webkit-text-stroke:.2px #1e1e22;">An <b>annotation</b> (Ukr. анотація) is a short</div>
<div id="t15" class="t" style="left:459.50px;top:336.33px;font-size:11.30px;font-weight:400;color:#1e1e22;transform:scaleX(0.9590);-webkit-text-stroke:.2px #1e1e22;">explanation or note added to a text or</div>
<div id="t16" class="t" style="left:459.50px;top:350.53px;font-size:11.30px;font-weight:400;color:#1e1e22;transform:scaleX(0.9473);-webkit-text-stroke:.2px #1e1e22;">image, or the act of adding short</div>
<div id="t17" class="t" style="left:459.50px;top:365.03px;font-size:11.30px;font-weight:400;color:#1e1e22;transform:scaleX(0.9454);-webkit-text-stroke:.2px #1e1e22;">explanations or notes.</div>
<div id="t18" class="t" style="left:459.50px;top:390.73px;font-size:11.30px;font-weight:400;color:#1e1e22;transform:scaleX(0.9475);-webkit-text-stroke:.2px #1e1e22;">An <b>annotated bibliography</b> (Ukr.</div>
<div id="t19" class="t" style="left:459.50px;top:404.93px;font-size:11.30px;font-weight:400;color:#1e1e22;transform:scaleX(0.9339);-webkit-text-stroke:.2px #1e1e22;">анотована бібліографія) includes a</div>
<div id="t20" class="t" style="left:459.50px;top:419.33px;font-size:11.30px;font-weight:400;color:#1e1e22;transform:scaleX(0.9575);-webkit-text-stroke:.2px #1e1e22;">paragraph following each citation that</div>
<div id="t21" class="t" style="left:459.50px;top:433.43px;font-size:11.30px;font-weight:400;color:#1e1e22;transform:scaleX(0.9485);-webkit-text-stroke:.2px #1e1e22;">summarizes the work.</div>
<div id="t22" class="t" style="left:2.00px;top:-3.74px;font-size:9.50px;font-weight:700;color:#e8e8e8;transform:scaleX(0.7657);">zoom</div>
<div id="t23" class="t" style="left:1.00px;top:6.13px;font-size:10.60px;font-weight:700;color:#fff;transform:scaleX(0.9365);">Workplace</div>
<div id="t24" class="t" style="left:121.00px;top:4.72px;font-size:8.60px;font-weight:400;color:#e6e6e6;transform:scaleX(0.9484);">Meeting</div>
<div id="t25" class="t" style="left:292.50px;top:4.72px;font-size:8.60px;font-weight:400;color:#f2f2f2;transform:scaleX(0.8863);">Olha Khmyzova's screen</div>
<div id="t26" class="t" style="left:957.50px;top:2.32px;font-size:8.60px;font-weight:400;color:#fff;transform:scaleX(0.9467);">View</div>
<div id="t27" class="t" style="left:32.00px;top:70.71px;font-size:6.60px;font-weight:400;color:#cdd2dc;transform:scaleX(1.0323);-webkit-mask-image:linear-gradient(90deg,#000 78%,transparent 100%);mask-image:linear-gradient(90deg,#000 78%,transparent 100%);">Вхідні - o.v.khm</div>
<div id="t28" class="t" style="left:116.00px;top:70.71px;font-size:6.60px;font-weight:400;color:#cdd2dc;transform:scaleX(0.9209);-webkit-mask-image:linear-gradient(90deg,#000 78%,transparent 100%);mask-image:linear-gradient(90deg,#000 78%,transparent 100%);">Головна – Canv</div>
<div id="t29" class="t" style="left:199.00px;top:70.71px;font-size:6.60px;font-weight:400;color:#cdd2dc;transform:scaleX(0.9160);-webkit-mask-image:linear-gradient(90deg,#000 78%,transparent 100%);mask-image:linear-gradient(90deg,#000 78%,transparent 100%);">abstract_24.02.2</div>
<div id="t30" class="t" style="left:282.00px;top:70.71px;font-size:6.60px;font-weight:400;color:#cdd2dc;transform:scaleX(0.9364);-webkit-mask-image:linear-gradient(90deg,#000 78%,transparent 100%);mask-image:linear-gradient(90deg,#000 78%,transparent 100%);">abstract_24.02.2</div>
<div id="t31" class="t" style="left:365.00px;top:70.71px;font-size:6.60px;font-weight:400;color:#cdd2dc;transform:scaleX(1.0455);-webkit-mask-image:linear-gradient(90deg,#000 78%,transparent 100%);mask-image:linear-gradient(90deg,#000 78%,transparent 100%);">How to Write sr</div>
<div id="t32" class="t" style="left:448.00px;top:70.71px;font-size:6.60px;font-weight:400;color:#cdd2dc;transform:scaleX(0.9590);-webkit-mask-image:linear-gradient(90deg,#000 78%,transparent 100%);mask-image:linear-gradient(90deg,#000 78%,transparent 100%);">modern law jour</div>
<div id="t33" class="t" style="left:531.00px;top:70.71px;font-size:6.60px;font-weight:400;color:#cdd2dc;transform:scaleX(0.8986);-webkit-mask-image:linear-gradient(90deg,#000 78%,transparent 100%);mask-image:linear-gradient(90deg,#000 78%,transparent 100%);">LAW JOURNAL I</div>
<div id="t34" class="t" style="left:613.00px;top:70.71px;font-size:6.60px;font-weight:400;color:#cdd2dc;transform:scaleX(0.9460);">Новая вкладка</div>
<div id="t35" class="t" style="left:72.50px;top:92.95px;font-size:6.20px;font-weight:700;color:#fff;transform:scaleX(0.9715);">Файл</div>
<div id="t36" class="t" style="left:96.00px;top:92.10px;font-size:7.80px;font-weight:400;color:#eef1f6;transform:scaleX(0.9254);">file:///C:/Users/User-PC/Downloads/abstract_24.02.2026.pdf</div>
<div id="t37" class="t" style="left:667.00px;top:92.88px;font-size:6.40px;font-weight:700;color:#fff;transform:scaleX(0.8815);">Учебный</div>
<div id="t38" class="t" style="left:708.00px;top:92.88px;font-size:6.40px;font-weight:700;color:#fff;transform:scaleX(0.8900);">Завершить обновление</div>
<div id="t39" class="t" style="left:28.00px;top:119.22px;font-size:7.30px;font-weight:700;color:#fff;transform:scaleX(0.9425);">abstract_24.02.2026</div>
<div id="t40" class="t" style="left:294.50px;top:119.54px;font-size:6.80px;font-weight:400;color:#fff;transform:scaleX(0.9256);">3</div>
<div id="t41" class="t" style="left:305.00px;top:119.54px;font-size:6.80px;font-weight:400;color:#e8e8e8;transform:scaleX(0.9697);">/ 15</div>
<div id="t42" class="t" style="left:352.50px;top:119.71px;font-size:6.60px;font-weight:700;color:#fff;transform:scaleX(1.0982);">67%</div>
<div id="t43" class="t" style="left:845.00px;top:120.98px;font-size:9.00px;font-weight:400;color:#fff;transform:scaleX(0.8972);">Olha Khmyzova</div>
<div id="t44" class="t" style="left:857.00px;top:192.18px;font-size:9.00px;font-weight:400;color:#fff;transform:scaleX(0.9201);">Вікторія Миколаєць</div>
<div id="t45" class="t" style="left:857.00px;top:263.18px;font-size:9.00px;font-weight:400;color:#fff;transform:scaleX(0.9183);">Грищук Ганна</div>
<div id="t46" class="t" style="left:857.00px;top:334.58px;font-size:9.00px;font-weight:400;color:#fff;transform:scaleX(0.8949);">Тетяна Гиріна</div>
<div id="t47" class="t" style="left:892.00px;top:368.22px;font-size:28.80px;font-weight:400;color:#fff;transform:scaleX(1.0083);-webkit-text-stroke:.4px #fff;">M</div>
<div id="t48" class="t" style="left:857.00px;top:406.78px;font-size:9.00px;font-weight:400;color:#fff;transform:scaleX(0.9353);">Максим Покотинський</div>
<div id="t49" class="t" style="left:851.00px;top:447.89px;font-size:13.60px;font-weight:700;color:#fff;transform:scaleX(0.9243);word-spacing:3px;">Володимир Де...</div>
<div id="t50" class="t" style="left:857.00px;top:477.88px;font-size:9.00px;font-weight:400;color:#fff;transform:scaleX(0.9225);">Володимир Деревецький</div>
<div id="t51" class="t" style="left:14.50px;top:546.40px;font-size:8.50px;font-weight:700;color:#fff;transform:scaleX(0.8805);">Audio</div>
<div id="t52" class="t" style="left:76.00px;top:546.40px;font-size:8.50px;font-weight:700;color:#fff;transform:scaleX(0.9130);">Video</div>
<div id="t53" class="t" style="left:303.70px;top:546.40px;font-size:8.50px;font-weight:700;color:#fff;transform:scaleX(0.8755);">Participants</div>
<div id="t54" class="t" style="left:390.50px;top:546.40px;font-size:8.50px;font-weight:700;color:#fff;transform:scaleX(0.8364);">Chat</div>
<div id="t55" class="t" style="left:444.50px;top:546.40px;font-size:8.50px;font-weight:700;color:#fff;transform:scaleX(0.8335);">React</div>
<div id="t56" class="t" style="left:503.20px;top:546.40px;font-size:8.50px;font-weight:700;color:#fff;transform:scaleX(0.8720);">Share</div>
<div id="t57" class="t" style="left:555.50px;top:546.40px;font-size:8.50px;font-weight:700;color:#fff;transform:scaleX(0.9149);">Meeting info</div>
<div id="t58" class="t" style="left:629.20px;top:546.40px;font-size:8.50px;font-weight:700;color:#fff;transform:scaleX(0.8282);">Apps</div>
<div id="t59" class="t" style="left:685.70px;top:546.40px;font-size:8.50px;font-weight:700;color:#fff;transform:scaleX(0.9016);">Notes</div>
<div id="t60" class="t" style="left:746.20px;top:546.40px;font-size:8.50px;font-weight:700;color:#fff;transform:scaleX(0.9502);">More</div>
<div id="t61" class="t" style="left:963.00px;top:546.40px;font-size:8.50px;font-weight:700;color:#fff;transform:scaleX(0.8088);">Leave</div>
<div id="t62" class="t" style="left:336.20px;top:530.79px;font-size:8.40px;font-weight:400;color:#b4b4b4;transform:scaleX(0.9418);">6</div>
</div>
</body>
</html>
